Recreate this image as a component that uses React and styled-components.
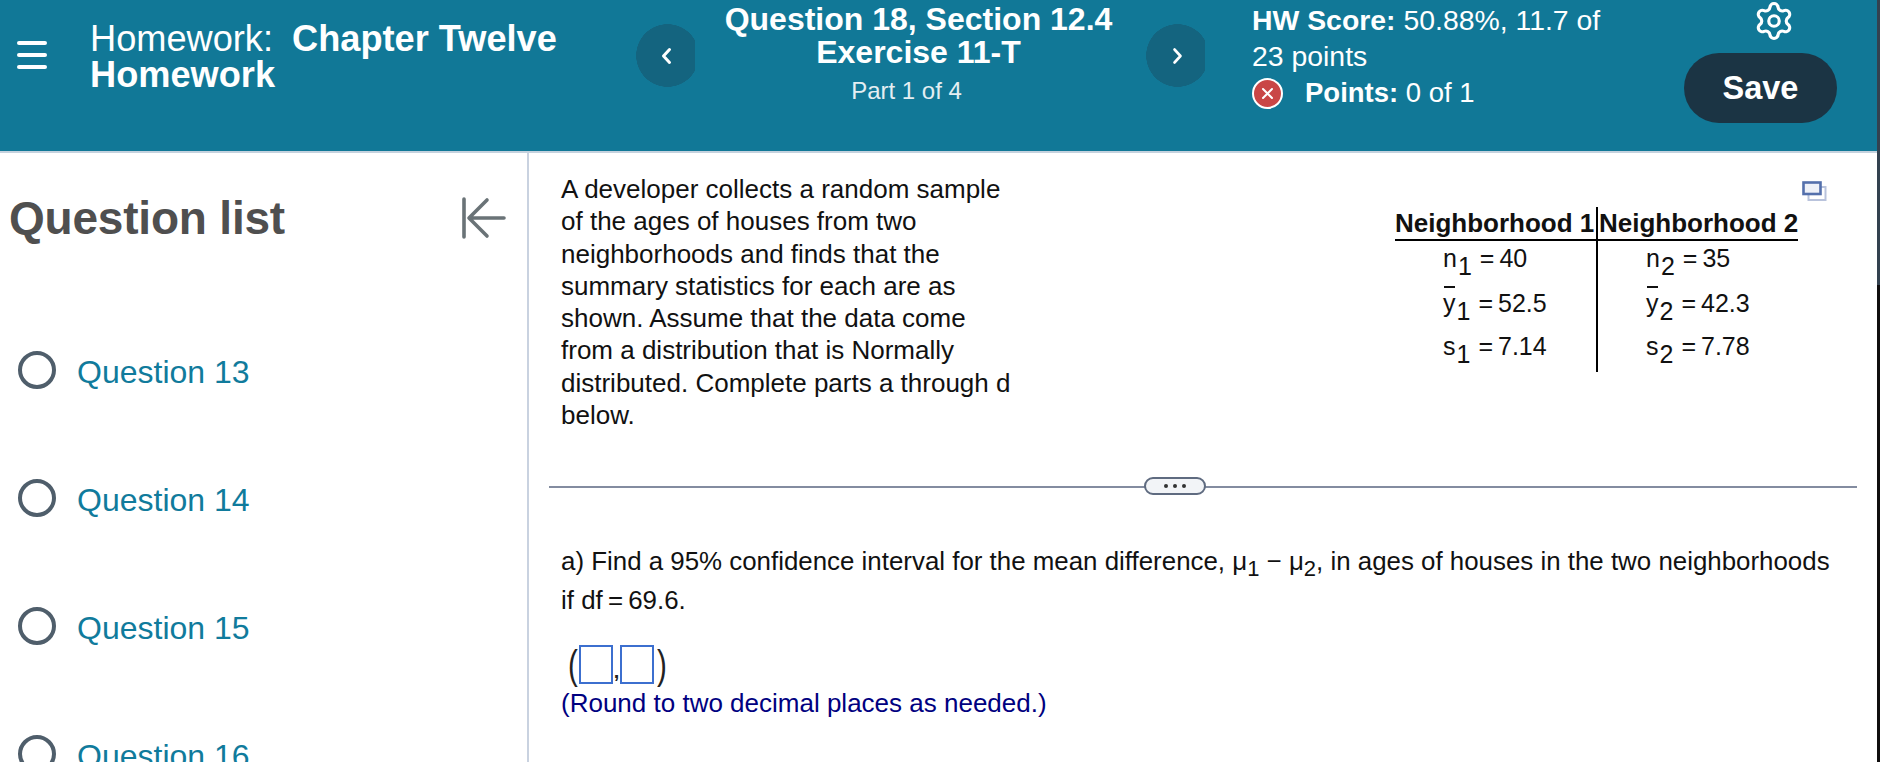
import React from "react";
import styled, { createGlobalStyle } from "styled-components";
import { Settings } from "lucide-react";

const Global = createGlobalStyle`
  html, body { margin: 0; padding: 0; height: 762px; overflow: hidden; background: #fff; }
  body { font-family: "Liberation Sans", Arial, sans-serif; }
  * { box-sizing: border-box; }
`;
const Shell = styled.div`
  width: 1880px; height: 762px; overflow: hidden; display: flex;
`;
const Edge = styled.div`
  flex: 0 0 3px; background: linear-gradient(#33414f 0 285px, #100e0e 285px);
`;
const Page = styled.div`
  flex: 1; min-width: 0; display: flex; flex-direction: column;
`;
const Header = styled.header`
  flex: 0 0 153px; height: 153px; background: #117897; border-bottom: 2px solid #c5d2de;
  color: #fff; display: flex; align-items: flex-start;
`;
const Menu = styled.button`
  width: 30px; margin: 41px 0 0 17px; padding: 0; border: 0; background: none;
  display: flex; flex-direction: column; gap: 8px;
  span { display: block; height: 4px; border-radius: 2px; background: #fff; }
`;
const Title = styled.h1`
  margin: 21px 0 0 43px; width: 546px; font-size: 36.2px; line-height: 36px; font-weight: 400;
  b { font-weight: 700; margin-left: 9px; }
  b.next { margin-left: 0; }
`;
const Nav = styled.button`
  flex: 0 0 59px; height: 63px; margin-top: 24px; border: 0; padding: 0 0 0 ${p => p.$pad}px;
  background: radial-gradient(circle 31.5px at 31.5px 31.5px, #14647f 99%, transparent 100%);
  display: flex; align-items: center; justify-content: center;
  svg { display: block; }
`;
const Center = styled.div`
  flex: 0 0 451px; text-align: center; padding: 3px 4px 0 0; font-size: 32px; line-height: 33px; font-weight: 700;
  small { display: block; font-size: 24px; font-weight: 400; line-height: 26px; margin-top: 9px; padding-right: 24px; color: #e4eef2; }
`;
const Score = styled.div`
  flex: 0 0 400px; margin-left: 47px; padding-top: 2px; font-size: 28.4px; line-height: 36px;
`;
const ScoreLine = styled.div`
  width: 370px;
`;
const PointsRow = styled.div`
  display: flex; align-items: center; gap: 22px; font-size: 27.5px; margin-top: 1px;
`;
const XIcon = styled.span`
  width: 31px; height: 31px; border-radius: 50%; background: #c94646; border: 2px solid #fff;
  display: flex; align-items: center; justify-content: center;
`;
const Tools = styled.div`
  display: flex; flex-direction: column; align-items: center; margin-left: 32px;
`;
const Gear = styled.div`
  height: 42px; margin: 0 0 11px 27px; display: flex; color: #fff;
`;
const Save = styled.button`
  width: 153px; height: 70px; border: 0; border-radius: 35px; background: #1b3444; color: #fff; padding: 1px 0 0;
  font: 700 32.5px "Liberation Sans", Arial, sans-serif;
`;
const Body = styled.div`
  flex: 1; display: flex; min-height: 0;
`;
const Side = styled.aside`
  flex: 0 0 529px; border-right: 2px solid #c9d2e0; overflow: hidden;
`;
const SideHead = styled.div`
  display: flex; align-items: center; justify-content: space-between; padding: 22px 21px 0 9px; height: 107px;
`;
const SideTitle = styled.h2`
  margin: 0; font-size: 46px; line-height: 44px; font-weight: 700; letter-spacing: -0.2px; color: #4f4f4f;
`;
const QList = styled.ul`
  list-style: none; margin: 94px 0 0; padding: 0 0 0 18px;
`;
const QItem = styled.li`
  height: 128px; display: flex; align-items: flex-start; gap: 21px; font-size: 32px; line-height: 36px; color: #107b9c;
  i { flex: 0 0 38px; height: 38px; margin-top: -3px; border: 4px solid #4f5e6b; border-radius: 50%; }
`;
const Main = styled.main`
  flex: 1; min-width: 0; padding: 20px 20px 0 20px;
`;
const Top = styled.div`
  display: flex; height: 313px; padding-left: 12px;
`;
const Intro = styled.p`
  margin: 0; width: 460px; font-size: 26px; line-height: 32.3px; color: #111;
`;
const TableWrap = styled.div`
  margin: 34px 0 0 374px; position: relative; width: 403px; flex: none;
`;
const Expand = styled.svg`
  position: absolute; left: 407px; top: -26px;
`;
const DataTable = styled.div`
  display: grid; grid-template-columns: 203px 200px; font-size: 25px; color: #111;
`;
const HeadCell = styled.div`
  height: 34px; font-weight: 700; font-size: 26px; line-height: 33px; white-space: nowrap; text-align: ${p => p.$l ? "right" : "left"};
  border-bottom: 2px solid #000; ${p => p.$l ? "border-right: 2px solid #000; padding-right: 2px;" : "padding-left: 1px;"}
`;
const Cell = styled.div`
  height: ${p => p.$h}px; line-height: 34px; white-space: nowrap; padding-left: 48px;
  ${p => p.$l ? "border-right: 2px solid #000;" : ""}
  sub { font-size: 25px; line-height: 0; vertical-align: -8px; margin: 0 8px 0 1px; }
`;
const Bar = styled.span`
  position: relative;
  &::before { content: ""; position: absolute; left: 1px; top: -3px; width: 11px; height: 2px; background: #111; }
`;
const Divider = styled.div`
  position: relative; height: 2px; background: #838ca0;
`;
const Dots = styled.div`
  position: absolute; left: 595px; top: -9px; width: 62px; height: 18px; border-radius: 9px;
  border: 2px solid #5f6b80; background: #f2f4f7; display: flex; align-items: center; justify-content: center; gap: 5px;
  span { width: 4px; height: 4px; border-radius: 50%; background: #333; }
`;
const PartA = styled.p`
  margin: 54px 0 0 12px; font-size: 25.88px; line-height: 38.5px; color: #111; white-space: nowrap;
  sub { font-size: 22px; line-height: 0; vertical-align: -6px; }
`;
const Answer = styled.div`
  margin: 26px 0 0 19px; display: flex; align-items: flex-end; height: 39px; color: #222;
`;
const Paren = styled.span`
  font-size: 41px; line-height: 38px; font-weight: 400; width: 11px; transform: scaleX(.72);
  transform-origin: ${p => p.$r ? "right" : "left"} center;
`;
const Box = styled.span`
  width: 34px; height: 39px; border: 2.5px solid #3c6fcf; background: #fff;
`;
const Comma = styled.span`
  width: 7px; font-size: 20px; line-height: 26px; text-align: center; font-weight: 700;
`;
const Note = styled.p`
  margin: 2px 0 0 12px; font-size: 26px; line-height: 34px; color: #000080; white-space: nowrap;
`;

const questions = [13, 14, 15, 16];

export default function App() {
  return (
    <Shell>
      <Global />
      <Page>
        <Header>
          <Menu aria-label="Menu"><span /><span /><span /></Menu>
          <Title>Homework:<b> Chapter Twelve</b><br /><b className="next">Homework</b></Title>
          <Nav $pad={0} aria-label="Previous">
            <svg width="12" height="18" viewBox="0 0 12 18"><path d="M9.5 2.5 L3.5 9 L9.5 15.5" fill="none" stroke="#fff" strokeWidth="3" strokeLinecap="round" strokeLinejoin="round" /></svg>
          </Nav>
          <Center>
            Question 18, Section 12.4<br />Exercise 11-T
            <small>Part 1 of 4</small>
          </Center>
          <Nav $pad={4} aria-label="Next">
            <svg width="12" height="18" viewBox="0 0 12 18"><path d="M2.5 2.5 L8.5 9 L2.5 15.5" fill="none" stroke="#fff" strokeWidth="2.6" strokeLinecap="round" strokeLinejoin="round" /></svg>
          </Nav>
          <Score>
            <ScoreLine><b>HW Score:</b> 50.88%, 11.7 of<br />23 points</ScoreLine>
            <PointsRow>
              <XIcon><svg width="13" height="13" viewBox="0 0 13 13"><path d="M2 2 L11 11 M11 2 L2 11" stroke="#fff" strokeWidth="2" strokeLinecap="round" /></svg></XIcon>
              <span><b>Points:</b> 0 of 1</span>
            </PointsRow>
          </Score>
          <Tools>
            <Gear><Settings size={42} strokeWidth={1.8} /></Gear>
            <Save>Save</Save>
          </Tools>
        </Header>
        <Body>
          <Side>
            <SideHead>
              <SideTitle>Question list</SideTitle>
              <svg width="44" height="42" viewBox="0 0 44 42" fill="none" stroke="#6a7377" strokeWidth="3.6" strokeLinecap="round" strokeLinejoin="round">
                <path d="M2 2 V40 M42 21 H8 M25 3 L7 21 L25 39" />
              </svg>
            </SideHead>
            <QList>
              {questions.map(q => (
                <QItem key={q}><i />Question {q}</QItem>
              ))}
            </QList>
          </Side>
          <Main>
            <Top>
              <Intro>A developer collects a random sample of the ages of houses from two neighborhoods and finds that the summary statistics for each are as shown. Assume that the data come from a distribution that is Normally distributed. Complete parts a through d below.</Intro>
              <TableWrap>
                <Expand width="25" height="20" viewBox="0 0 25 20" fill="none">
                  <rect x="6.5" y="6" width="17" height="13" stroke="#b9c3dc" strokeWidth="2" />
                  <rect x="1.5" y="1.5" width="17" height="11.5" fill="#eef1f8" stroke="#5470ac" strokeWidth="2.6" />
                </Expand>
                <DataTable>
                  <HeadCell $l>Neighborhood 1</HeadCell>
                  <HeadCell>Neighborhood 2</HeadCell>
                  <Cell $l $h={45}>n<sub>1</sub>=&#8201;40</Cell>
                  <Cell $h={45}>n<sub>2</sub>=&#8201;35</Cell>
                  <Cell $l $h={43}><Bar>y</Bar><sub>1</sub>=&#8201;52.5</Cell>
                  <Cell $h={43}><Bar>y</Bar><sub>2</sub>=&#8201;42.3</Cell>
                  <Cell $l $h={43}>s<sub>1</sub>=&#8201;7.14</Cell>
                  <Cell $h={43}>s<sub>2</sub>=&#8201;7.78</Cell>
                </DataTable>
              </TableWrap>
            </Top>
            <Divider><Dots><span /><span /><span /></Dots></Divider>
            <PartA>a) Find a 95% confidence interval for the mean difference, μ<sub>1</sub> − μ<sub>2</sub>, in ages of houses in the two neighborhoods<br />if df&#8201;=&#8201;69.6.</PartA>
            <Answer>
              <Paren>(</Paren><Box /><Comma>,</Comma><Box /><Paren $r>)</Paren>
            </Answer>
            <Note>(Round to two decimal places as needed.)</Note>
          </Main>
        </Body>
      </Page>
      <Edge />
    </Shell>
  );
}
